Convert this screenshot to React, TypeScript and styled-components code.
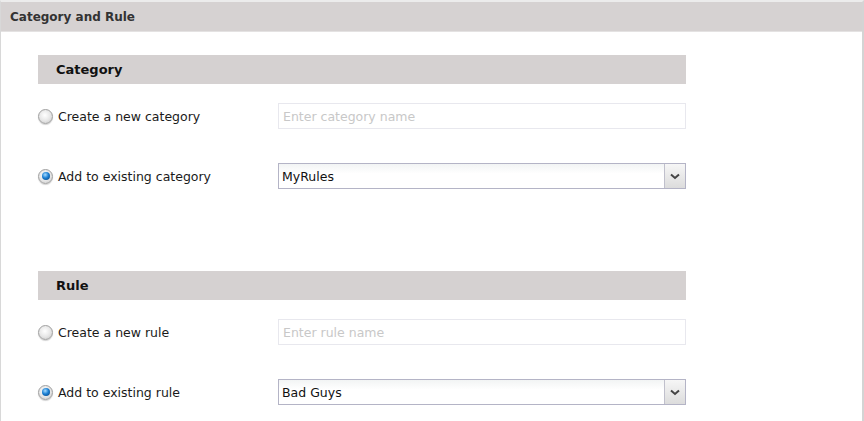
import React from 'react'
import styled, { createGlobalStyle } from 'styled-components'

const GlobalStyle = createGlobalStyle`
  html, body {
    margin: 0;
    padding: 0;
    background: #ffffff;
  }
  body {
    font-family: "DejaVu Sans", Verdana, sans-serif;
    color: #1a1a1a;
  }
`

const Panel = styled.div`
  width: 864px;
  height: 421px;
  box-sizing: border-box;
  border-left: 1px solid #d8d8d8;
  border-right: 2px solid #d4d4d4;
  border-top: 2px solid #ececec;
  overflow: hidden;
`

const PanelTitle = styled.div`
  height: 29px;
  display: flex;
  align-items: center;
  padding-left: 9px;
  background: #d6d2d2;
  border-bottom: 1px solid #e4e2e2;
  font-size: 12px;
  font-weight: bold;
  color: #333333;
`

const Body = styled.div`
  padding: 23px 0 0 37px;
  display: flex;
  flex-direction: column;
`

const Section = styled.section<{ $gap?: number }>`
  width: 648px;
  margin-bottom: ${({ $gap }) => $gap ?? 0}px;
`

const SectionHeader = styled.div`
  height: 29px;
  display: flex;
  align-items: center;
  padding-left: 18px;
  background: #d5d1d1;
  font-size: 13px;
  font-weight: bold;
  color: #111111;
`

const Row = styled.div<{ $top: number }>`
  display: flex;
  align-items: center;
  margin-top: ${({ $top }) => $top}px;
  height: 26px;
`

const Option = styled.label`
  width: 240px;
  display: flex;
  align-items: center;
  gap: 5px;
  font-size: 12.5px;
  color: #1a1a1a;
`

const Radio = styled.span<{ $on?: boolean }>`
  width: 15px;
  height: 15px;
  border-radius: 50%;
  box-sizing: border-box;
  border: 1px solid #a0a0a0;
  background: radial-gradient(circle at 45% 40%, #ffffff 0%, #e8e8e8 50%, #c4c4c4 100%);
  box-shadow: 0 1px 1px rgba(0, 0, 0, 0.18);
  position: relative;
  flex: none;

  &::after {
    content: '';
    display: ${({ $on }) => ($on ? 'block' : 'none')};
    position: absolute;
    left: 2.5px;
    top: 2.5px;
    width: 8px;
    height: 8px;
    border-radius: 50%;
    background: radial-gradient(circle at 40% 35%, #a8dcff 0%, #1b80d4 45%, #0a3c74 100%);
  }
`

const TextInput = styled.input`
  width: 408px;
  height: 26px;
  box-sizing: border-box;
  border: 1px solid #e8e8ee;
  padding: 0 4px;
  font-family: "DejaVu Sans", Verdana, sans-serif;
  font-size: 12.5px;
  outline: none;
  background: #ffffff;

  &::placeholder {
    color: #c8c8c8;
  }
`

const Select = styled.div`
  width: 408px;
  height: 26px;
  box-sizing: border-box;
  border: 1px solid #b4b4c6;
  display: flex;
  background: linear-gradient(#f2f4f4, #ffffff 40%);
`

const SelectValue = styled.div`
  flex: 1;
  display: flex;
  align-items: center;
  padding-left: 3px;
  font-size: 12.5px;
  color: #111111;
`

const SelectButton = styled.div`
  width: 20px;
  border-left: 1px solid #c0c0cc;
  display: flex;
  align-items: center;
  justify-content: center;
  background: linear-gradient(#f6f6f6, #dcdcdc);
`

const Chevron = () => (
  <svg width="10" height="7" viewBox="0 0 10 7">
    <path d="M1 1.5 L5 5 L9 1.5" fill="none" stroke="#444" strokeWidth="2" />
  </svg>
)

const Dropdown = ({ value }: { value: string }) => (
  <Select>
    <SelectValue>{value}</SelectValue>
    <SelectButton>
      <Chevron />
    </SelectButton>
  </Select>
)

interface ChoiceProps {
  title: string
  noun: string
  existing: string
  gap?: number
}

const ChoiceSection = ({ title, noun, existing, gap }: ChoiceProps) => (
  <Section $gap={gap}>
    <SectionHeader>{title}</SectionHeader>
    <Row $top={19}>
      <Option>
        <Radio />
        Create a new {noun}
      </Option>
      <TextInput placeholder={`Enter ${noun} name`} readOnly />
    </Row>
    <Row $top={34}>
      <Option>
        <Radio $on />
        Add to existing {noun}
      </Option>
      <Dropdown value={existing} />
    </Row>
  </Section>
)

export default function App() {
  return (
    <>
      <GlobalStyle />
      <Panel>
        <PanelTitle>Category and Rule</PanelTitle>
        <Body>
          <ChoiceSection title="Category" noun="category" existing="MyRules" gap={82} />
          <ChoiceSection title="Rule" noun="rule" existing="Bad Guys" />
        </Body>
      </Panel>
    </>
  )
}
